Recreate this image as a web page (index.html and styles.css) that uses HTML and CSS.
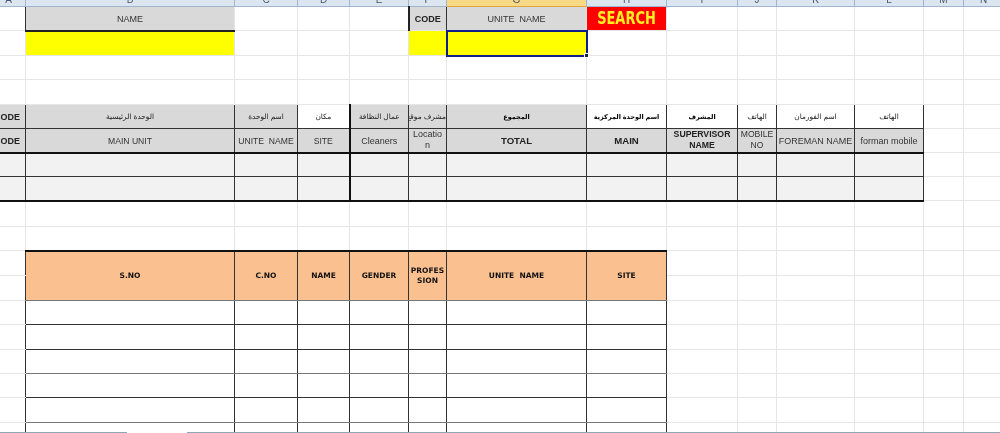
FILE: index.html
```html
<!DOCTYPE html>
<html lang="en">
<head>
<meta charset="utf-8">
<title>Search sheet</title>
<link rel="stylesheet" href="styles.css">
</head>
<body>
<table class="sheet">
<colgroup>
<col class="ca"><col class="cb"><col class="cc"><col class="cd"><col class="ce"><col class="cf"><col class="cg"><col class="ch"><col class="ci"><col class="cj"><col class="ck"><col class="cl"><col class="cm"><col class="cn">
</colgroup>
<thead>
<tr class="letters"><th>A</th><th>B</th><th>C</th><th>D</th><th>E</th><th>F</th><th class="sel">G</th><th>H</th><th>I</th><th>J</th><th>K</th><th>L</th><th>M</th><th>N</th></tr>
</thead>
<tbody>
<tr class="r24 form"><td class="edge"></td><td class="gray thb">NAME</td><td></td><td></td><td></td><td class="gray tl b">CODE</td><td class="gray">UNITE&nbsp; NAME</td><td class="search"><span class="search-text">SEARCH</span></td><td></td><td></td><td></td><td></td><td></td><td></td></tr>
<tr class="r25"><td></td><td class="yellow"></td><td></td><td></td><td></td><td class="yellow"></td><td class="yellow active"></td><td></td><td></td><td></td><td></td><td></td><td></td><td></td></tr>
<tr class="r24"><td></td><td></td><td></td><td></td><td></td><td></td><td></td><td></td><td></td><td></td><td></td><td></td><td></td><td></td></tr>
<tr class="r25"><td></td><td></td><td></td><td></td><td></td><td></td><td></td><td></td><td></td><td></td><td></td><td></td><td></td><td></td></tr>
<tr class="r24 ar"><td class="gray bk code">CODE</td><td class="gray bk" dir="rtl">الوحدة الرئيسية</td><td class="gray bk" dir="rtl">اسم الوحدة</td><td class="bk" dir="rtl">مكان</td><td class="gray bk bl2" dir="rtl">عمال النظافة</td><td class="gray bk" dir="rtl">مشرف موقع</td><td class="gray bk b" dir="rtl">المجموع</td><td class="bk b" dir="rtl">اسم الوحدة المركزية</td><td class="bk b" dir="rtl">المشرف</td><td class="bk" dir="rtl">الهاتف</td><td class="bk" dir="rtl">اسم الفورمان</td><td class="bk" dir="rtl">الهاتف</td><td></td><td></td></tr>
<tr class="r24 en"><td class="gray bk code">CODE</td><td class="gray bk nar">MAIN UNIT</td><td class="gray bk nar">UNITE&nbsp; NAME</td><td class="gray bk nar">SITE</td><td class="gray bk bl2">Cleaners</td><td class="gray bk wrap">Locatio<br>n</td><td class="gray bk b">TOTAL</td><td class="gray bk b">MAIN</td><td class="gray bk b wrap sup">SUPERVISOR<br>NAME</td><td class="gray bk wrap nar">MOBILE<br>NO</td><td class="gray bk">FOREMAN NAME</td><td class="gray bk">forman mobile</td><td class="thl"></td><td></td></tr>
<tr class="r24 data"><td class="pale bk"></td><td class="pale bk"></td><td class="pale bk"></td><td class="pale bk"></td><td class="pale bk bl2"></td><td class="pale bk"></td><td class="pale bk"></td><td class="pale bk"></td><td class="pale bk"></td><td class="pale bk"></td><td class="pale bk"></td><td class="pale bk"></td><td class="thl"></td><td></td></tr>
<tr class="r24 data last"><td class="pale bk"></td><td class="pale bk"></td><td class="pale bk"></td><td class="pale bk"></td><td class="pale bk bl2"></td><td class="pale bk"></td><td class="pale bk"></td><td class="pale bk"></td><td class="pale bk"></td><td class="pale bk"></td><td class="pale bk"></td><td class="pale bk"></td><td class="thl"></td><td></td></tr>
<tr class="r26"><td></td><td></td><td></td><td></td><td></td><td></td><td></td><td></td><td></td><td></td><td></td><td></td><td></td><td></td></tr>
<tr class="r24"><td></td><td></td><td></td><td></td><td></td><td></td><td></td><td></td><td></td><td></td><td></td><td></td><td></td><td></td></tr>
<tr class="r25 list"><td class="edge"></td><td class="orange bk top" rowspan="2">S.NO</td><td class="orange bk top" rowspan="2">C.NO</td><td class="orange bk top" rowspan="2">NAME</td><td class="orange bk top" rowspan="2">GENDER</td><td class="orange bk top wrap" rowspan="2">PROFES<br>SION</td><td class="orange bk top" rowspan="2">UNITE&nbsp; NAME</td><td class="orange bk top" rowspan="2">SITE</td><td class="endl"></td><td></td><td></td><td></td><td></td><td></td></tr>
<tr class="r25"><td class="edge"></td><td class="endl"></td><td></td><td></td><td></td><td></td><td></td></tr>
<tr class="r24 list"><td class="edge"></td><td class="bk"></td><td class="bk"></td><td class="bk"></td><td class="bk"></td><td class="bk"></td><td class="bk"></td><td class="bk"></td><td class="endl"></td><td></td><td></td><td></td><td></td><td></td></tr>
<tr class="r25 list"><td class="edge"></td><td class="bk"></td><td class="bk"></td><td class="bk"></td><td class="bk"></td><td class="bk"></td><td class="bk"></td><td class="bk"></td><td class="endl"></td><td></td><td></td><td></td><td></td><td></td></tr>
<tr class="r24 list soft"><td class="edge"></td><td class="bk"></td><td class="bk"></td><td class="bk"></td><td class="bk"></td><td class="bk"></td><td class="bk"></td><td class="bk"></td><td class="endl"></td><td></td><td></td><td></td><td></td><td></td></tr>
<tr class="r24 list"><td class="edge"></td><td class="bk"></td><td class="bk"></td><td class="bk"></td><td class="bk"></td><td class="bk"></td><td class="bk"></td><td class="bk"></td><td class="endl"></td><td></td><td></td><td></td><td></td><td></td></tr>
<tr class="r25 list soft"><td class="edge"></td><td class="bk"></td><td class="bk"></td><td class="bk"></td><td class="bk"></td><td class="bk"></td><td class="bk"></td><td class="bk"></td><td class="endl"></td><td></td><td></td><td></td><td></td><td></td></tr>
<tr class="r24 list"><td class="edge"></td><td class="bk"></td><td class="bk"></td><td class="bk"></td><td class="bk"></td><td class="bk"></td><td class="bk"></td><td class="bk"></td><td class="endl"></td><td></td><td></td><td></td><td></td><td></td></tr>
</tbody>
</table>
<div class="scrollbar"><span class="thumb"></span></div>
</body>
</html>
```
FILE: styles.css
```css
html, body {
  margin: 0;
  height: 433px;
  overflow: hidden;
  background: #fff;
}
body {
  position: relative;
}
.sheet {
  table-layout: fixed;
  border-collapse: collapse;
  width: 1012px;
  margin: -13px 0 0 -9px;
  font: 9px/12px "Liberation Sans", "DejaVu Sans", sans-serif;
  color: #333;
  filter: blur(0.3px);
}
.ca { width: 34px; }
.cb { width: 209px; }
.cc { width: 63px; }
.cd { width: 52px; }
.ce { width: 59px; }
.cf { width: 38px; }
.cg { width: 140px; }
.ch { width: 80px; }
.ci { width: 71px; }
.cj { width: 39px; }
.ck { width: 78px; }
.cl { width: 69px; }
.cm { width: 40px; }
.cn { width: 40px; }
.sheet td {
  border: 1px solid #e6e6e6;
  padding: 0;
  text-align: center;
  vertical-align: middle;
  overflow: hidden;
  white-space: nowrap;
}
.letters { height: 19px; }
.letters th {
  background: #dce6f1;
  border: 1px solid #9fb6cd;
  border-top: 0;
  color: #46586c;
  font-weight: 400;
  font-size: 10px;
  line-height: 12px;
  padding: 7px 0 0;
  overflow: hidden;
}
.letters .sel {
  background: #f8d985;
  border-bottom-color: #e0a83c;
}
.r24 { height: 24px; }
.r25 { height: 25px; }
.r26 { height: 26px; }
.gray { background: #d9d9d9; }
.yellow { background: #ff0; }
.pale { background: #f2f2f2; }
.orange {
  background: #fac08f;
  color: #111;
  font-family: "DejaVu Sans", sans-serif;
  font-weight: 700;
  font-size: 7.5px;
  line-height: 10px;
}
.sheet .orange { padding-top: 1px; }
.sheet .orange.wrap { padding-top: 0; }
.sheet .bk { border: 1px solid #333; }
.sheet .edge { border-right: 1px solid #333; }
.sheet .endl { border-left: 1px solid #444; }
.sheet .thb { border-bottom: 2px solid #222; }
.sheet .tl { border-left: 2px solid #222; border-right: 1px solid #333; }
.sheet .b { font-weight: 700; color: #222; }
.sheet .bl2 { border-left: 2px solid #111; }
.sheet .wrap { white-space: nowrap; }
.form .gray { padding-top: 1px; }
.en td { padding-top: 1px; }
.sheet .en .wrap { padding-top: 0; line-height: 11px; }
.en .nar { font-size: 8.6px; }
.en .b { font-size: 9.6px; }
.en .sup { font-size: 8.7px; }
.sheet .en .bk { border-bottom: 2px solid #111; }
.ar td { font-size: 7.4px; color: #222; padding-top: 1px; }
.sheet .ar .b { font-size: 6.5px; color: #000; }
.sheet .code { font-size: 9px; font-weight: 700; color: #222; padding-right: 3px; }
.sheet .last .bk { border-bottom: 2px solid #111; }
.sheet .top { border-top: 2px solid #111; }
.sheet .thl { border-left: 1px solid #222; }
.data td:nth-child(4),
.data td:nth-child(6),
.data td:nth-child(8),
.list td:nth-child(4),
.list td:nth-child(6),
.list td:nth-child(8) { border-left-color: #707070; }
.sheet .soft .bk { border-bottom-color: #777; }
.sheet .orange { border-bottom-color: #777; }
.sheet .search {
  background: #f00;
}
.search-text {
  display: inline-block;
  color: #fe2;
  font: 700 13px/16px "DejaVu Sans", sans-serif;
  transform: scaleY(1.3);
}
.sheet .active {
  border: 2px solid #0f1f8a;
  position: relative;
  overflow: visible;
  height: 22px;
  box-sizing: border-box;
}
.sheet .active::after {
  content: "";
  position: absolute;
  right: -3px;
  bottom: -3px;
  width: 3px;
  height: 3px;
  background: #1a2340;
  border: 1px solid #fff;
}
.scrollbar {
  position: absolute;
  left: 0;
  right: 0;
  bottom: 0;
  height: 1px;
  background: #8fa5b5;
}
.thumb {
  display: block;
  position: absolute;
  left: 127px;
  width: 60px;
  height: 1px;
  background: #fff;
}
```
